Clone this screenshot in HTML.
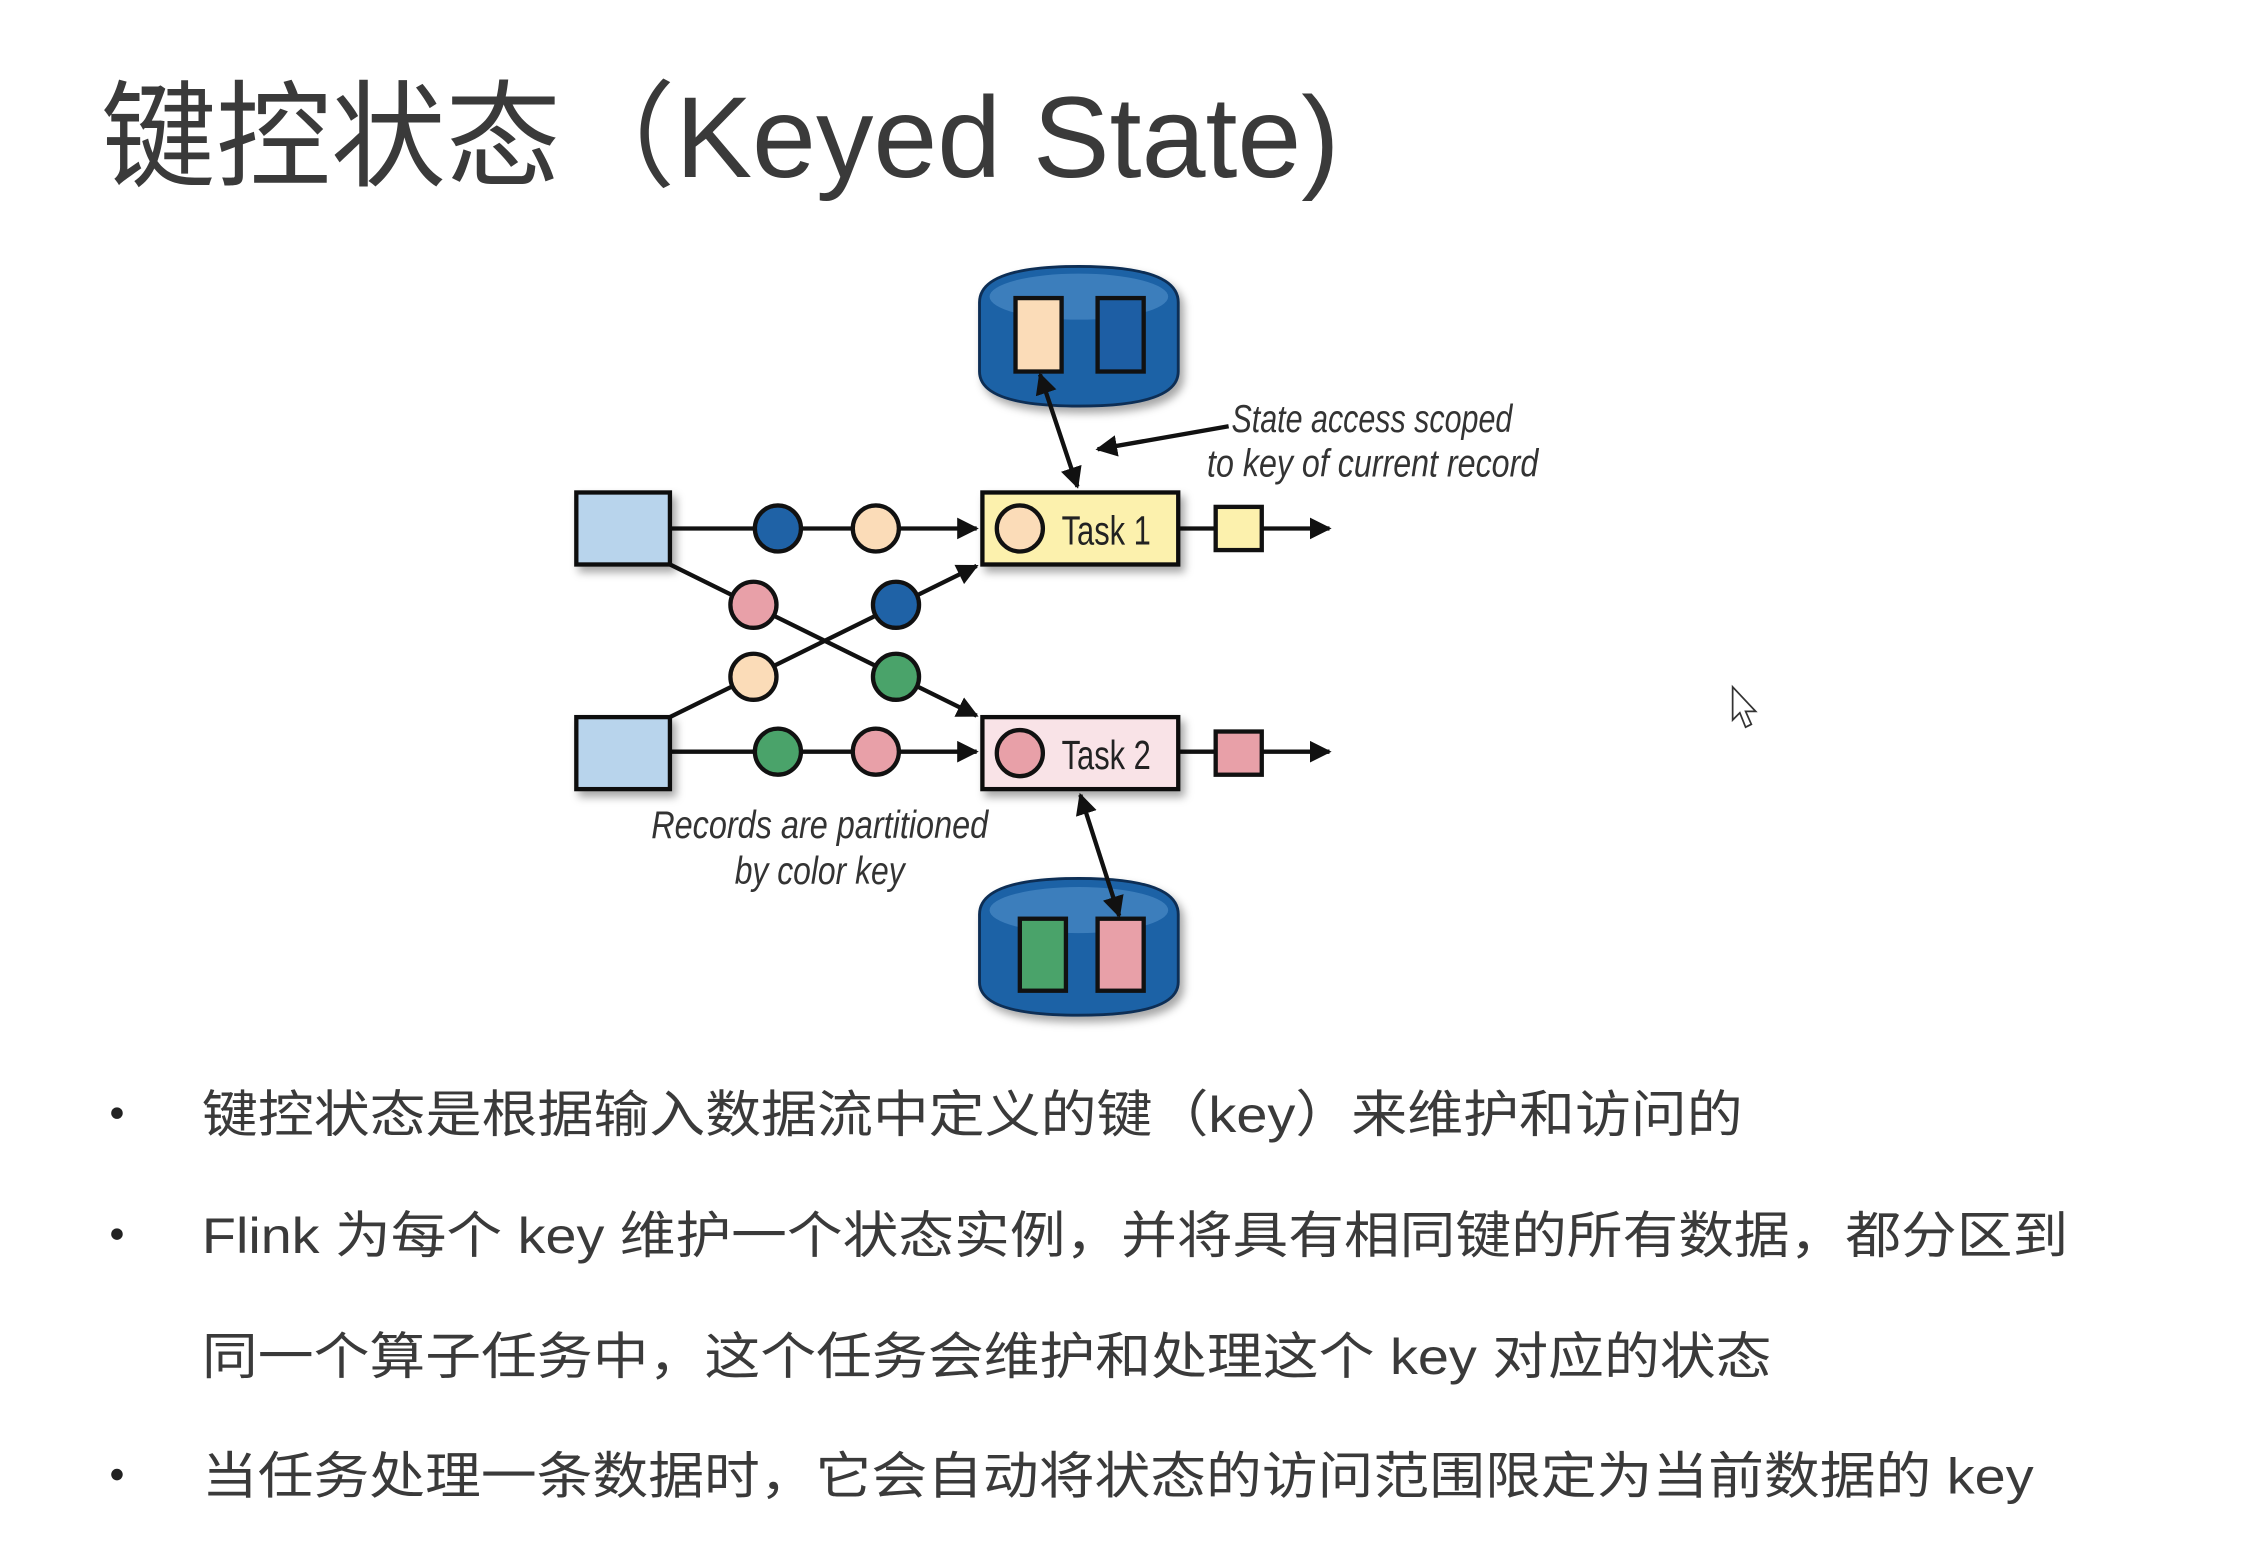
<!DOCTYPE html>
<html><head><meta charset="utf-8"><style>
html,body{margin:0;padding:0;background:#fff;width:2260px;height:1548px;overflow:hidden}
svg{display:block}
.t{font-family:"Liberation Sans","Noto Sans CJK SC",sans-serif;fill:#3a3a3a}
.i{font-family:"Liberation Sans",sans-serif;font-style:italic;fill:#333}
</style></head><body>
<svg width="2260" height="1548" viewBox="0 0 1569 1075" xmlns="http://www.w3.org/2000/svg">
<defs>
<marker id="a" viewBox="0 0 10 10" refX="9" refY="5" markerWidth="5" markerHeight="5" orient="auto-start-reverse"><path d="M0 0L10 5L0 10z" fill="#111"/></marker>
<filter id="s" x="-20%" y="-20%" width="150%" height="150%"><feDropShadow dx="3" dy="4" stdDeviation="3" flood-color="#000" flood-opacity="0.35"/></filter>
</defs>
<text class="t" x="70" y="123" font-size="80" textLength="860" lengthAdjust="spacingAndGlyphs">键控状态（Keyed State)</text>

<g filter="url(#s)">
<path d="M680 210 Q680 185 749 185 Q818 185 818 210 L818 258 Q818 282 749 282 Q680 282 680 258Z" fill="#1f62a6" stroke="#0d2f55" stroke-width="2"/>
</g>
<ellipse cx="749" cy="206" rx="62" ry="16" fill="#4a8ac6" opacity="0.7"/>
<rect x="705" y="207" width="32" height="51" fill="#fbdcb8" stroke="#111" stroke-width="3"/>
<rect x="762" y="207" width="32" height="51" fill="#1d5ea4" stroke="#111" stroke-width="3"/>

<g filter="url(#s)">
<path d="M680 635 Q680 610 749 610 Q818 610 818 635 L818 682 Q818 705 749 705 Q680 705 680 682Z" fill="#1f62a6" stroke="#0d2f55" stroke-width="2"/>
</g>
<ellipse cx="749" cy="632" rx="62" ry="16" fill="#4a8ac6" opacity="0.7"/>
<rect x="708" y="638" width="32" height="50" fill="#4aa36a" stroke="#111" stroke-width="3"/>
<rect x="762" y="638" width="32" height="50" fill="#e8a0a8" stroke="#111" stroke-width="3"/>

<g stroke="#111" stroke-width="3" fill="none">
<line x1="465" y1="367" x2="678" y2="367" marker-end="url(#a)"/>
<line x1="465" y1="522" x2="678" y2="522" marker-end="url(#a)"/>
<line x1="465" y1="392" x2="678" y2="497" marker-end="url(#a)"/>
<line x1="465" y1="498" x2="678" y2="393" marker-end="url(#a)"/>
<line x1="818" y1="367" x2="923" y2="367" marker-end="url(#a)"/>
<line x1="818" y1="522" x2="923" y2="522" marker-end="url(#a)"/>
<line x1="722" y1="260" x2="748" y2="338" marker-start="url(#a)" marker-end="url(#a)"/>
<line x1="750" y1="552" x2="777" y2="636" marker-start="url(#a)" marker-end="url(#a)"/>
<line x1="853" y1="296" x2="762" y2="312" marker-end="url(#a)"/>
</g>

<g filter="url(#s)">
<rect x="400" y="342" width="65" height="50" fill="#b8d4ec" stroke="#111" stroke-width="3"/>
<rect x="400" y="498" width="65" height="50" fill="#b8d4ec" stroke="#111" stroke-width="3"/>
<rect x="682" y="342" width="136" height="50" fill="#fcf1ad" stroke="#111" stroke-width="3"/>
<rect x="682" y="498" width="136" height="50" fill="#f9e3e7" stroke="#111" stroke-width="3"/>
</g>
<rect x="844" y="352" width="32" height="30" fill="#fcf1ad" stroke="#111" stroke-width="3"/>
<rect x="844" y="508" width="32" height="30" fill="#e8a0a8" stroke="#111" stroke-width="3"/>

<g stroke="#111" stroke-width="3">
<circle cx="540" cy="367" r="16" fill="#1f62a6"/>
<circle cx="608" cy="367" r="16" fill="#fbdcb8"/>
<circle cx="540" cy="522" r="16" fill="#4aa36a"/>
<circle cx="608" cy="522" r="16" fill="#e8a0a8"/>
<circle cx="523" cy="420" r="16" fill="#e8a0a8"/>
<circle cx="622" cy="470" r="16" fill="#4aa36a"/>
<circle cx="523" cy="470" r="16" fill="#fbdcb8"/>
<circle cx="622" cy="420" r="16" fill="#1f62a6"/>
<circle cx="708" cy="367" r="16" fill="#fbdcb8"/>
<circle cx="708" cy="523" r="16" fill="#e8a0a8"/>
</g>
<text x="737" y="378" font-family="Liberation Sans,sans-serif" font-size="28" fill="#222" textLength="62" lengthAdjust="spacingAndGlyphs">Task 1</text>
<text x="737" y="534" font-family="Liberation Sans,sans-serif" font-size="28" fill="#222" textLength="62" lengthAdjust="spacingAndGlyphs">Task 2</text>
<text class="i" x="855" y="300" font-size="27" textLength="195" lengthAdjust="spacingAndGlyphs">State access scoped</text>
<text class="i" x="838" y="331" font-size="27" textLength="230" lengthAdjust="spacingAndGlyphs">to key of current record</text>
<text class="i" x="452" y="582" font-size="27" textLength="234" lengthAdjust="spacingAndGlyphs">Records are partitioned</text>
<text class="i" x="510" y="614" font-size="27" textLength="118" lengthAdjust="spacingAndGlyphs">by color key</text>

<path d="M1203 477 L1203 500 L1208 495 L1212 505 L1216 503 L1212 494 L1219 494 Z" fill="#fff" stroke="#333" stroke-width="1.2"/>

<g fill="#222">
<circle cx="81" cy="773" r="4"/>
<circle cx="81" cy="857" r="4"/>
<circle cx="81" cy="1024" r="4"/>
</g>
<g class="t" font-size="35" style="fill:#3a3a3a">
<text x="140" y="786" textLength="1070" lengthAdjust="spacingAndGlyphs">键控状态是根据输入数据流中定义的键（key）来维护和访问的</text>
<text x="140" y="870" textLength="1296" lengthAdjust="spacingAndGlyphs">Flink 为每个 key 维护一个状态实例，并将具有相同键的所有数据，都分区到</text>
<text x="140" y="954" textLength="1090" lengthAdjust="spacingAndGlyphs">同一个算子任务中，这个任务会维护和处理这个 key 对应的状态</text>
<text x="140" y="1037" textLength="1272" lengthAdjust="spacingAndGlyphs">当任务处理一条数据时，它会自动将状态的访问范围限定为当前数据的 key</text>
</g>
</svg>
</body></html>
